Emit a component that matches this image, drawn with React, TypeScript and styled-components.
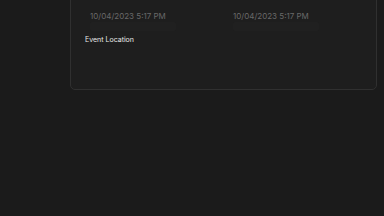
import * as React from 'react';
import styled, { createGlobalStyle } from 'styled-components';

const GlobalStyle = createGlobalStyle`
  html, body {
    margin: 0;
    padding: 0;
    background: #1b1b1b;
    font-family: 'Inter', 'Liberation Sans', sans-serif;
  }
`;

const Page = styled.div`
  width: 384px;
  height: 216px;
  padding: 0 7px 0 70px;
  box-sizing: border-box;
  overflow: hidden;
`;

const Card = styled.div`
  margin-top: -12px;
  height: 102px;
  box-sizing: border-box;
  background: #1e1e1e;
  border: 1px solid #303030;
  border-radius: 5px;
  padding: 22px 14px 0 14px;
`;

const DateRow = styled.div`
  display: grid;
  grid-template-columns: 143px 1fr;
  padding-left: 5px;
`;

const DateField = styled.div`
  display: flex;
  flex-direction: column;
`;

const DateText = styled.span`
  font-size: 8px;
  line-height: 10px;
  color: #696969;
`;

const FieldShadow = styled.div`
  margin-top: 1px;
  width: 86px;
  height: 9px;
  background: #202020;
  border-radius: 2px;
`;

const Label = styled.div`
  margin-top: 4px;
  font-size: 7px;
  line-height: 9px;
  color: #e8e8e8;
`;

export default function App() {
  return (
    <>
      <GlobalStyle />
      <Page>
        <Card>
          <DateRow>
            <DateField>
              <DateText>10/04/2023 5:17 PM</DateText>
              <FieldShadow />
            </DateField>
            <DateField>
              <DateText>10/04/2023 5:17 PM</DateText>
              <FieldShadow />
            </DateField>
          </DateRow>
          <Label>Event Location</Label>
        </Card>
      </Page>
    </>
  );
}
